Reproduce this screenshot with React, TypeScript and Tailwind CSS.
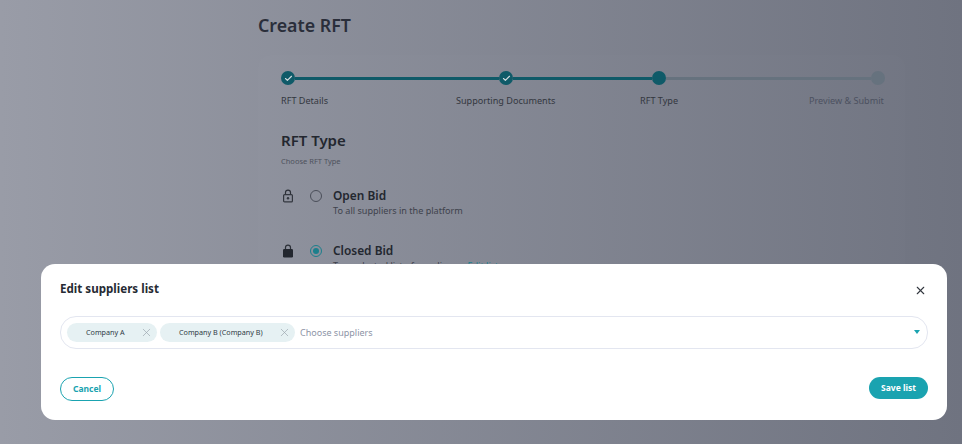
import { Check, X } from "lucide-react";

const StepDot = ({ done, active }: { done?: boolean; active?: boolean }) => (
  <div
    className={
      done || active
        ? "flex size-[14px] shrink-0 items-center justify-center rounded-full bg-[#0f5a68]"
        : "size-[14px] shrink-0 rounded-full bg-[#66727e]"
    }
  >
    {done && <Check className="size-[9px] text-[#d5dde0]" strokeWidth={3} />}
  </div>
);

const LockIcon = ({ locked }: { locked?: boolean }) => (
  <svg viewBox="0 0 12 14" className="h-[14px] w-[12px]" fill="none">
    <path d="M3.5 5.5V3.6a2.5 2.5 0 0 1 5 0v1.9" stroke="#2c3038" strokeWidth="1.2" />
    {locked ? (
      <rect x="1" y="5" width="10" height="8.5" rx="1.2" fill="#23272f" />
    ) : (
      <>
        <rect x="1.6" y="5.6" width="8.8" height="7.3" rx="1" stroke="#33373f" strokeWidth="1.2" />
        <circle cx="6" cy="9.2" r="1.2" fill="#33373f" />
      </>
    )}
  </svg>
);

const BidOption = ({
  title,
  note,
  locked,
  selected,
}: {
  title: string;
  note: React.ReactNode;
  locked?: boolean;
  selected?: boolean;
}) => (
  <div className="flex h-[30px] items-start">
    <div className="flex h-[16px] w-[14px] items-center justify-center">
      <LockIcon locked={locked} />
    </div>
    <div className="ml-[15px] flex h-[16px] items-center">
      <div
        className={
          selected
            ? "flex size-[12px] items-center justify-center rounded-full border-[1.5px] border-[#1c7f8c]"
            : "size-[12px] rounded-full border-[1.5px] border-[#4a4e59]"
        }
      >
        {selected && <div className="size-[6px] rounded-full bg-[#1c7f8c]" />}
      </div>
    </div>
    <div className="ml-[11px] -mt-[1px]">
      <p className="text-[11.9px] leading-[16px] font-semibold text-[#23272f]">{title}</p>
      <p className="mt-[1px] text-[9.1px] leading-[14px] text-[#3e424c]">{note}</p>
    </div>
  </div>
);

const Chip = ({ label, width }: { label: string; width: string }) => (
  <div className={`flex h-[19px] ${width} items-center justify-between rounded-full bg-[#e6f1f3] pr-[4px] pl-[19px]`}>
    <span className="text-[7.2px] text-[#2f3a45]">{label}</span>
    <X className="size-[13px] text-[#9aa4ad]" strokeWidth={1.25} />
  </div>
);

export default function App() {
  return (
    <div className="relative h-[444px] w-[962px] overflow-hidden bg-gradient-to-r from-[#999ca7] to-[#6f7380] font-['Noto_Sans',sans-serif]">
      <div className="ml-[258px] w-[647px] pt-[13px]">
        <h1 className="text-[17.8px] leading-[25px] font-semibold text-[#2a2e3a]">Create RFT</h1>
        <div className="mt-[17px] rounded-t-[12px] bg-white/[0.012] pt-[16px] pl-[23px]">
          <div className="flex h-[14px] w-[604px] items-center">
            <StepDot done />
            <div className="h-[3px] w-[204px] bg-[#0f5a68]" />
            <StepDot done />
            <div className="h-[3px] w-[139px] bg-[#0f5a68]" />
            <StepDot active />
            <div className="h-[3px] w-[205px] bg-[#66727e]" />
            <StepDot />
          </div>
          <div className="mt-[9px] flex text-[9.1px] leading-[14px] text-[#33373f]">
            <span className="w-[175px]">RFT Details</span>
            <span className="w-[184px]">Supporting Documents</span>
            <span className="w-[169px]">RFT Type</span>
            <span className="text-[#4c5160]">Preview &amp; Submit</span>
          </div>
          <h2 className="mt-[22px] text-[15px] leading-[20px] font-semibold text-[#23272f]">RFT Type</h2>
          <p className="mt-[5px] text-[7.5px] leading-[12px] text-[#4e525d]">Choose RFT Type</p>
          <div className="mt-[21px] flex flex-col gap-[25px]">
            <BidOption title="Open Bid" note="To all suppliers in the platform" />
            <BidOption
              locked
              selected
              title="Closed Bid"
              note={
                <>
                  To a selected list of suppliers · <span className="ml-[5px] text-[#1c7f8c]">Edit list</span>
                </>
              }
            />
          </div>
        </div>
      </div>

      <div className="absolute top-[264px] left-[41px] h-[156px] w-[906px] rounded-[14px] bg-white px-[19px] pt-[17px]">
        <div className="flex h-[16px] items-center justify-between">
          <h3 className="text-[11.6px] font-bold text-[#262a33]">Edit suppliers list</h3>
          <X className="mt-[3px] mr-[1px] size-[13px] text-[#33373f]" strokeWidth={2} />
        </div>
        <div className="mt-[19px] flex h-[33px] items-center gap-[3px] rounded-[16px] border border-[#e3e6f0] pl-[6px]">
          <Chip label="Company A" width="w-[90px]" />
          <Chip label="Company B (Company B)" width="w-[135px]" />
          <span className="mt-[1px] ml-[2px] text-[9px] text-[#8d94a6]">Choose suppliers</span>
          <div className="mr-[7px] mb-[2px] ml-auto size-0 border-x-[3.5px] border-t-[4px] border-x-transparent border-t-[#1aa3b0]" />
        </div>
        <div className="mt-[28px] flex items-start justify-between">
          <button className="h-[24px] w-[54px] rounded-full border border-[#1aa3b0] text-[8.5px] font-bold text-[#1aa3b0]">
            Cancel
          </button>
          <button className="h-[22px] w-[59px] rounded-full bg-[#1aa3b0] text-[8.5px] font-bold text-white">
            Save list
          </button>
        </div>
      </div>
    </div>
  );
}
